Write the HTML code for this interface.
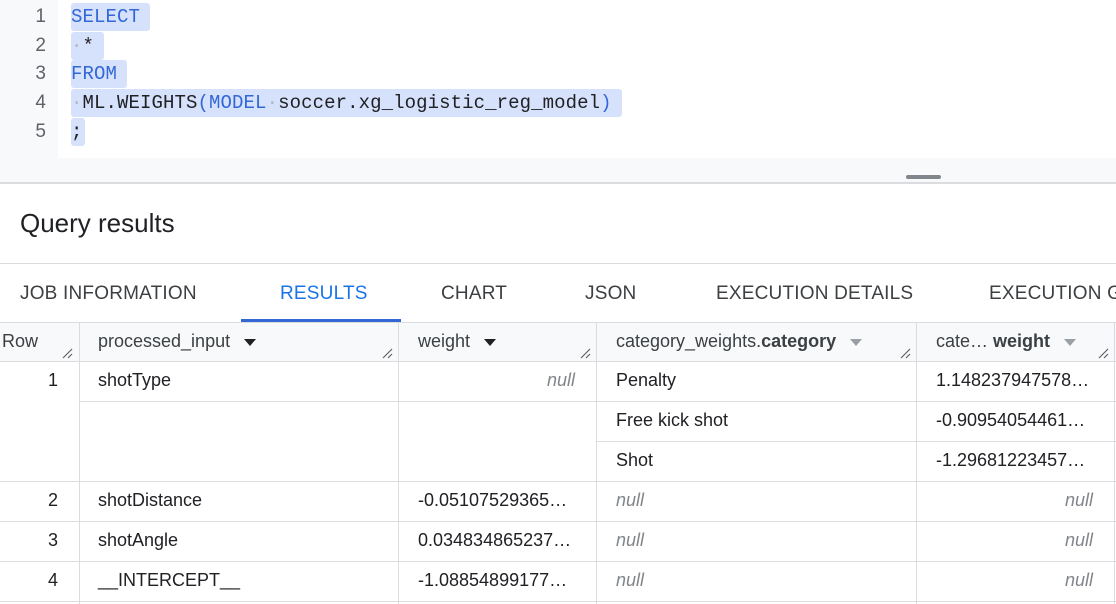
<!DOCTYPE html>
<html><head><meta charset="utf-8"><style>
*{margin:0;padding:0;box-sizing:border-box}
html,body{overflow:hidden}
body{width:1116px;height:604px;background:#fff;font-family:"Liberation Sans",Arial,sans-serif;color:#202124;position:relative}
.abs{position:absolute}
.gut{left:0;top:0;width:58px;height:158px;background:#f8f9fa}
.ln{position:absolute;width:46px;text-align:right;font-family:"Liberation Sans",sans-serif;font-size:19px;color:#5f6368}
.code{position:absolute;left:71px;font-family:"Liberation Mono",monospace;font-size:19px;letter-spacing:0.1px;white-space:pre;line-height:28px;height:28px;background:#d6e2fb;border-radius:3px;padding-right:10px}
.kw{color:#3367d6}
.dot{color:#b0b8c8}
.band{left:0;top:158px;width:1116px;height:26px;background:#f8f9fa;border-bottom:2px solid #dadce0}
.tab{position:absolute;top:283px;font-size:19px;color:#3c4043;letter-spacing:.2px;white-space:nowrap}
.h{position:absolute;top:322px;height:40px;background:#f8f9fa;border-bottom:1px solid #dadce0;border-top:1px solid #dadce0}
.ht{position:absolute;top:331px;font-size:18px;color:#3c4043;white-space:nowrap}
.c{position:absolute;font-size:18px;color:#202124;white-space:nowrap}
.vl{position:absolute;top:322px;width:1px;height:282px;background:#dadce0}
.hl{position:absolute;height:1px;background:#dadce0}
.nul{position:absolute;font-size:18px;color:#80868b;font-style:italic}
.tri{display:inline-block;width:0;height:0;border-left:6px solid transparent;border-right:6px solid transparent;border-top:7px solid #202124;margin-left:14px;vertical-align:middle}
.g{border-top-color:#9aa0a6}
.grip{position:absolute;top:347px;width:12px;height:12px}
</style></head><body>
<div class="abs gut"></div>
<div class="ln" style="top:6px">1</div>
<div class="ln" style="top:35px">2</div>
<div class="ln" style="top:63px">3</div>
<div class="ln" style="top:92px">4</div>
<div class="ln" style="top:121px">5</div>
<div class="code kw" style="top:3px">SELECT</div>
<div class="code" style="top:32px"><span class="dot">·</span>*</div>
<div class="code kw" style="top:60px">FROM</div>
<div class="code" style="top:89px"><span class="dot">·</span>ML.WEIGHTS<span class="kw">(MODEL</span><span class="dot">·</span>soccer.xg_logistic_reg_model<span class="kw">)</span></div>
<div class="code" style="top:118px;padding-right:2px">;</div>
<div class="abs band"></div>
<div class="abs" style="left:906px;top:175px;width:35px;height:4px;border-radius:2px;background:#80868b"></div>
<div class="abs" style="left:20px;top:208px;font-size:26px;color:#202124">Query results</div>
<div class="hl" style="left:0;top:263px;width:1116px"></div>
<div class="tab" style="left:20px">JOB INFORMATION</div>
<div class="tab" style="left:280px;color:#1a73e8">RESULTS</div>
<div class="tab" style="left:441px">CHART</div>
<div class="tab" style="left:585px">JSON</div>
<div class="tab" style="left:716px">EXECUTION DETAILS</div>
<div class="tab" style="left:989px;width:127px;overflow:hidden">EXECUTION GRAPH</div>
<div class="abs" style="left:241px;top:319px;width:160px;height:3px;background:#3367d6"></div>
<div class="h" style="left:0;width:1116px"></div>
<div class="ht" style="left:2px">Row</div>
<div class="ht" style="left:98px">processed_input<span class="tri"></span></div>
<div class="ht" style="left:418px">weight<span class="tri"></span></div>
<div class="ht" style="left:616px">category_weights.<b>category</b><span class="tri g"></span></div>
<div class="ht" style="left:936px">cate… <b>weight</b><span class="tri g"></span></div>
<svg class="grip" style="left:61px" viewBox="0 0 12 12"><path d="M2 11L11 2M7 11L11 7" stroke="#5f6368" stroke-width="1.2"/></svg>
<svg class="grip" style="left:381px" viewBox="0 0 12 12"><path d="M2 11L11 2M7 11L11 7" stroke="#5f6368" stroke-width="1.2"/></svg>
<svg class="grip" style="left:579px" viewBox="0 0 12 12"><path d="M2 11L11 2M7 11L11 7" stroke="#5f6368" stroke-width="1.2"/></svg>
<svg class="grip" style="left:899px" viewBox="0 0 12 12"><path d="M2 11L11 2M7 11L11 7" stroke="#5f6368" stroke-width="1.2"/></svg>
<svg class="grip" style="left:1097px" viewBox="0 0 12 12"><path d="M2 11L11 2M7 11L11 7" stroke="#5f6368" stroke-width="1.2"/></svg>
<div class="vl" style="left:79px"></div>
<div class="vl" style="left:398px"></div>
<div class="vl" style="left:596px"></div>
<div class="vl" style="left:916px"></div>
<div class="vl" style="left:1114px"></div>
<div class="hl" style="left:79px;top:401px;width:1037px"></div>
<div class="hl" style="left:596px;top:441px;width:520px"></div>
<div class="hl" style="left:0;top:481px;width:1116px"></div>
<div class="hl" style="left:0;top:521px;width:1116px"></div>
<div class="hl" style="left:0;top:561px;width:1116px"></div>
<div class="hl" style="left:0;top:601px;width:1116px"></div>
<div class="c" style="left:48px;top:370px">1</div>
<div class="c" style="left:98px;top:370px">shotType</div>
<div class="nul" style="left:547px;top:370px">null</div>
<div class="c" style="left:616px;top:370px">Penalty</div>
<div class="c" style="left:936px;top:370px">1.148237947578…</div>
<div class="c" style="left:616px;top:410px">Free kick shot</div>
<div class="c" style="left:936px;top:410px">-0.90954054461…</div>
<div class="c" style="left:616px;top:450px">Shot</div>
<div class="c" style="left:936px;top:450px">-1.29681223457…</div>
<div class="c" style="left:48px;top:490px">2</div>
<div class="c" style="left:98px;top:490px">shotDistance</div>
<div class="c" style="left:418px;top:490px">-0.05107529365…</div>
<div class="nul" style="left:616px;top:490px">null</div>
<div class="nul" style="left:1065px;top:490px">null</div>
<div class="c" style="left:48px;top:530px">3</div>
<div class="c" style="left:98px;top:530px">shotAngle</div>
<div class="c" style="left:418px;top:530px">0.034834865237…</div>
<div class="nul" style="left:616px;top:530px">null</div>
<div class="nul" style="left:1065px;top:530px">null</div>
<div class="c" style="left:48px;top:570px">4</div>
<div class="c" style="left:98px;top:570px">__INTERCEPT__</div>
<div class="c" style="left:418px;top:570px">-1.08854899177…</div>
<div class="nul" style="left:616px;top:570px">null</div>
<div class="nul" style="left:1065px;top:570px">null</div>
</body></html>
